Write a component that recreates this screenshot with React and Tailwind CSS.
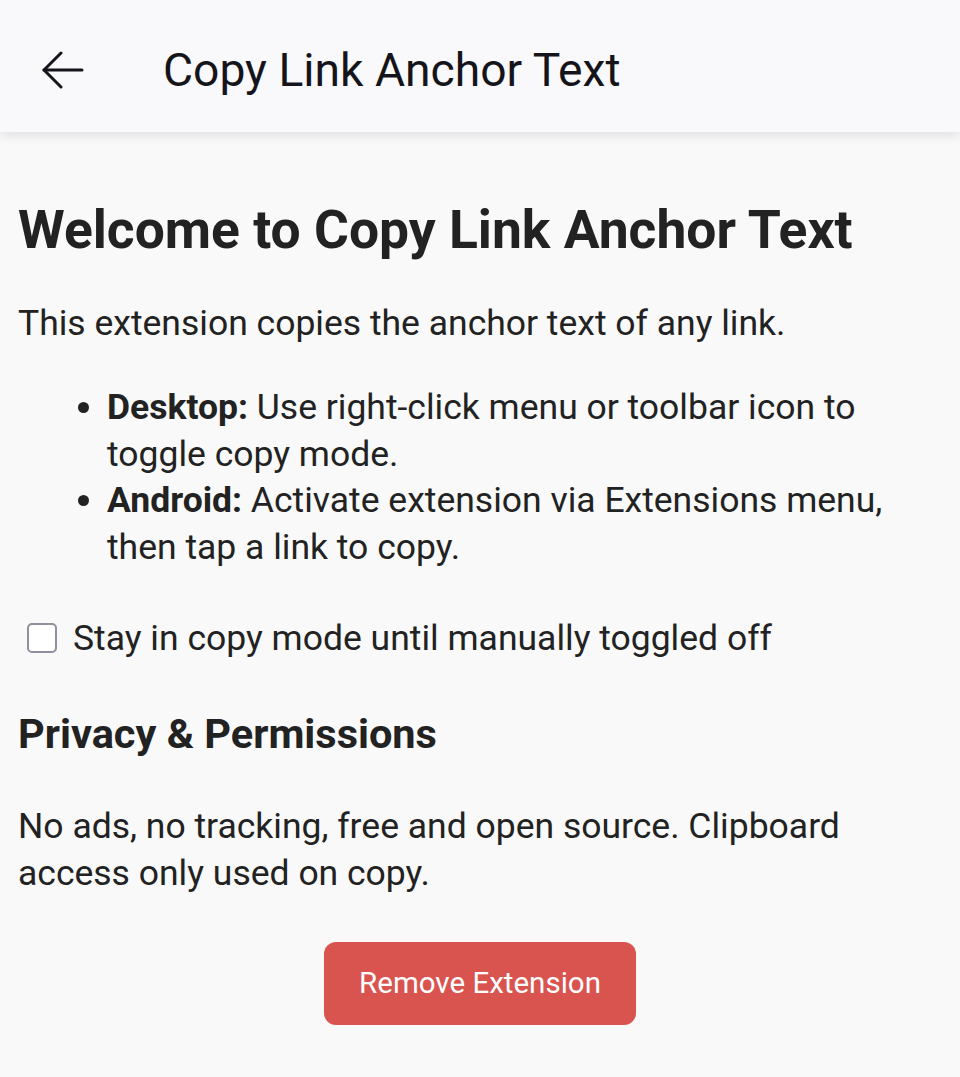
const BackArrow = () => (
  <svg width="44" height="38" viewBox="0 0 44 38" fill="none" stroke="#15141a" strokeWidth="3" strokeLinecap="round" strokeLinejoin="round">
    <path d="M3 19H41" />
    <path d="M20 2L3 19L20 36" />
  </svg>
)

const App = () => {
  return (
    <div className="min-h-[1077px] bg-[#f9f9f9] text-[#222222] font-['Roboto',sans-serif]">
      <header className="relative z-10 h-[132px] bg-[#f9f9fb] flex items-center pt-[8px] shadow-[0_2px_12px_rgba(0,0,0,0.13)]">
        <div className="w-[163px] flex items-center pl-[41px]">
          <BackArrow />
        </div>
        <h1 className="text-[46.2px] leading-[56px] text-[#15141a]">Copy Link Anchor Text</h1>
      </header>

      <main className="px-[18px] pt-[66px]">
        <h2 className="text-[53.4px] leading-[64px] font-bold">Welcome to Copy Link Anchor Text</h2>
        <p className="text-[35.5px] leading-[47px] mt-[38px]">This extension copies the anchor text of any link.</p>
        <ul className="list-disc pl-[89px] mt-[37px] text-[35.5px] leading-[46.7px]">
          <li><strong>Desktop:</strong> Use right-click menu or toolbar icon to toggle copy mode.</li>
          <li><strong>Android:</strong> Activate extension via Extensions menu, then tap a link to copy.</li>
        </ul>

        <label className="flex items-center gap-[16px] mt-[44px] pl-[9px] text-[35.5px] leading-[47px]">
          <span className="h-[30px] w-[30px] rounded-[5px] border-2 border-[#8f8f9d] bg-white shrink-0" />
          <span>Stay in copy mode until manually toggled off</span>
        </label>

        <h3 className="text-[41.5px] leading-[50px] font-bold mt-[47px]">Privacy &amp; Permissions</h3>
        <p className="text-[35.5px] leading-[47px] mt-[44px]">No ads, no tracking, free and open source. Clipboard access only used on copy.</p>

        <div className="flex justify-center mt-[45px]">
          <button className="w-[312px] h-[83px] rounded-[12px] bg-[#d9534f] text-white text-[29.5px]">Remove Extension</button>
        </div>
      </main>
    </div>
  )
}

export default App
